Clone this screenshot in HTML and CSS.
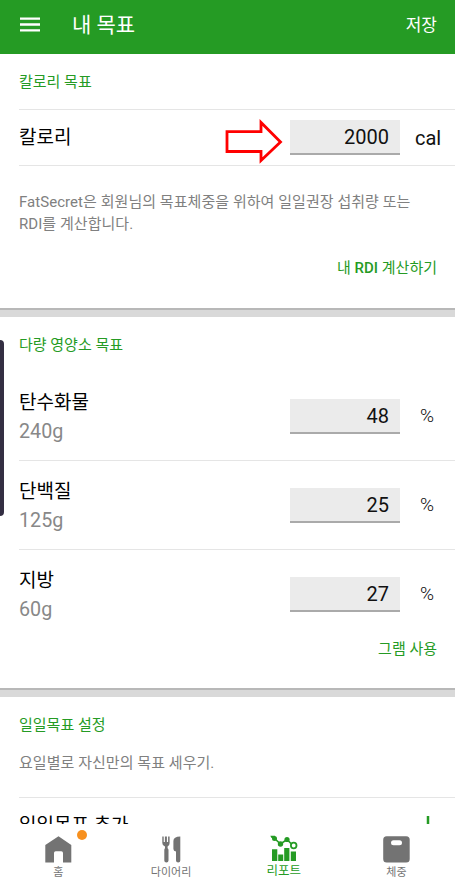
FILE: index.html
```html
<!DOCTYPE html>
<html lang="ko">
<head>
<meta charset="utf-8">
<title>내 목표</title>
<link rel="stylesheet" href="styles.css">
</head>
<body>
<div class="app">
  <header class="topbar">
    <svg class="menu" width="20" height="15" viewBox="0 0 20 15"><path d="M0 1.6h20M0 7.5h20M0 13.4h20" stroke="#fff" stroke-width="2.4"/></svg>
    <h1 class="title">내 목표</h1>
    <span class="save">저장</span>
  </header>

  <main class="content">
    <section class="card calories">
      <h2 class="heading">칼로리 목표</h2>
      <div class="row calorie-row">
        <span class="name">칼로리</span>
        <svg class="arrow" width="58" height="46" viewBox="0 0 58 46"><path d="M2 12.7H36V3.5L55.500 23L36 41.500V32.500H2Z" fill="#fff" stroke="#f00" stroke-width="2.800"/></svg>
        <span class="field">2000</span>
        <span class="unit">cal</span>
      </div>
      <p class="note">FatSecret은 회원님의 목표체중을 위하여 일일권장 섭취량 또는<br>RDI를 계산합니다.</p>
      <div class="link">내 <b>RDI</b> 계산하기</div>
    </section>

    <section class="card macros">
      <h2 class="heading">다량 영양소 목표</h2>
      <div class="row macro">
        <div class="label"><span class="name">탄수화물</span><span class="grams">240g</span></div>
        <span class="field">48</span><span class="unit percent">%</span>
      </div>
      <div class="row macro">
        <div class="label"><span class="name">단백질</span><span class="grams">125g</span></div>
        <span class="field">25</span><span class="unit percent">%</span>
      </div>
      <div class="row macro last">
        <div class="label"><span class="name">지방</span><span class="grams">60g</span></div>
        <span class="field">27</span><span class="unit percent">%</span>
      </div>
      <div class="link">그램 사용</div>
    </section>

    <section class="card daily">
      <h2 class="heading">일일목표 설정</h2>
      <p class="note">요일별로 자신만의 목표 세우기.</p>
      <div class="row add">
        <span class="name">일일목표 추가</span>
        <svg class="plus" width="20" height="20" viewBox="0 0 20 20"><path d="M10 0V20M0 10H20" stroke="#259b24" stroke-width="2.500"/></svg>
      </div>
    </section>
    <div class="edge-handle"></div>
  </main>

  <nav class="tabs">
    <div class="tab">
      <svg width="27" height="27" viewBox="0 0 27 27"><path d="M13.500 .3L26.300 9V26.500H18V17Q18 15.300 16.300 15.300H10.700Q9 15.300 9 17V26.500H.3V9Z" fill="#737373"/></svg>
      <span>홈</span>
      <i class="dot"></i>
    </div>
    <div class="tab">
      <svg width="19" height="27" viewBox="0 0 19 27"><path d="M.3.500H1.700V6H2.900V.5H4.900V6H6.100V.5H7.600V7Q7.600 9.800 5.600 10.600V12.300Q6.500 12.700 6.500 14V24.500Q6.500 26.500 4.400 26.500Q2.300 26.500 2.300 24.500V14Q2.300 12.700 3 12.300V10.600Q.3 9.800.3 7ZM18.300.5V24.500Q18.300 26.500 16.200 26.500Q14 26.500 14 24.500V15.500Q11.400 15.300 11.400 13V5Q11.400.5 18.300.5Z" fill="#737373"/></svg>
      <span>다이어리</span>
    </div>
    <div class="tab active">
      <svg width="28" height="27" viewBox="0 0 28 27"><g fill="#259b24"><path d="M2 14.300H7.300V26H2ZM8.200 19.500H13.200V26H8.200ZM14.200 13H19.400V26H14.200ZM20.800 16.500H26V26H20.800Z"/><circle cx="4.500" cy="3.500" r="2.500"/><circle cx="10.500" cy="9" r="2.700"/><circle cx="17" cy="4.500" r="2.600"/><path d="M.3.7H5V3H1.500Z"/></g><path d="M3 2L10.500 9L17 4.500L21.500 9" fill="none" stroke="#259b24" stroke-width="1.700"/><circle cx="23.700" cy="10.500" r="2.800" fill="#fff" stroke="#259b24" stroke-width="1.800"/></svg>
      <span>리포트</span>
    </div>
    <div class="tab">
      <svg width="27" height="27" viewBox="0 0 27 27"><rect x=".2" y=".3" width="26.500" height="26.200" rx="3.500" fill="#737373"/><rect x="8" y="4.300" width="11" height="5" rx="2.500" fill="#fff"/></svg>
      <span>체중</span>
    </div>
  </nav>
</div>
</body>
</html>
```
FILE: styles.css
```css
* { box-sizing: border-box; }

body {
  margin: 0;
  background: #fff;
  color: #111;
  font-family: Roboto, "Noto Sans CJK KR", sans-serif;
}

.app {
  display: flex;
  flex-direction: column;
  width: 455px;
  height: 883px;
  overflow: hidden;
}

.topbar {
  flex: none;
  display: flex;
  align-items: center;
  height: 54px;
  padding: 0 18px 6px 20px;
  background: #259b24;
  color: #fff;
}

.title {
  flex: 1;
  margin: 2px 0 0 32px;
  font-size: 21px;
  line-height: 30px;
  font-weight: 400;
}

.save { margin-top: 2px; font-size: 17px; line-height: 24px; }

.content {
  position: relative;
  flex: none;
  height: 770px;
  overflow: hidden;
}

.card { padding-left: 19px; }

.calories, .macros {
  border-bottom: 7px solid #d9d9d9;
  box-shadow: inset 0 -2px 0 #b8b8b8;
}

.calories { height: 263px; }
.macros { height: 380px; }

.heading {
  margin: 0;
  padding-top: 17px;
  height: 55px;
  font-size: 15px;
  line-height: 22px;
  font-weight: 400;
  color: #259b24;
}

.row {
  display: flex;
  align-items: center;
}

.name {
  flex: 1;
  font-size: 19px;
  line-height: 28px;
  color: #000;
}

.calorie-row {
  height: 57px;
  border-top: 1px solid #e5e5e5;
  border-bottom: 1px solid #e5e5e5;
}

.arrow { flex: none; margin: 8px 7px 0 0; }

.field {
  flex: none;
  width: 110px;
  height: 35px;
  padding-right: 11px;
  border-bottom: 2px solid #aaa;
  background: #ebebeb;
  font-size: 20px;
  line-height: 34px;
  text-align: right;
}

.unit {
  flex: none;
  width: 55px;
  padding-left: 15px;
  font-size: 20px;
  line-height: 28px;
}

.note {
  margin: 0;
  padding-top: 25px;
  font-size: 15px;
  line-height: 22px;
  letter-spacing: 0.05px;
  color: #808080;
}

.link {
  padding-right: 18px;
  font-size: 15px;
  line-height: 22px;
  text-align: right;
  color: #259b24;
}

.link b { font-weight: 500; }
.calories .link { margin-top: 22px; }

.macro { height: 89px; border-bottom: 1px solid #e5e5e5; }
.macro.last { height: 88px; border-bottom: 0; }
.label { flex: 1; display: flex; flex-direction: column; padding-top: 1px; }
.label .name, .grams { flex: none; line-height: 29px; }
.grams { font-size: 19.700px; color: #888; }
.percent { padding-left: 20px; font-size: 19px; }
.percent { font-weight: 300; }

.daily .note { padding-top: 0; height: 45px; }
.add { padding: 14px 17px 0 0; border-top: 1px solid #e5e5e5; }

.edge-handle {
  position: absolute;
  left: 0;
  top: 286px;
  width: 4px;
  height: 176px;
  border-radius: 0 4px 4px 0;
  background: #332e42;
}

.tabs {
  flex: none;
  display: grid;
  grid-template-columns: repeat(4, 112.700px);
  height: 59px;
  padding: 12px 0 0 2px;
  background: #fff;
}

.tab {
  position: relative;
  display: flex;
  flex-direction: column;
  align-items: center;
  font-size: 11px;
  line-height: 20px;
  color: #737373;
}

.active { color: #259b24; font-size: 12.5px; margin-top: -1px; }
.active span { margin-top: -1px; }

.dot {
  position: absolute;
  left: 74.500px;
  top: -6px;
  width: 10px;
  height: 10px;
  border-radius: 50%;
  background: #f7901e;
}
```
